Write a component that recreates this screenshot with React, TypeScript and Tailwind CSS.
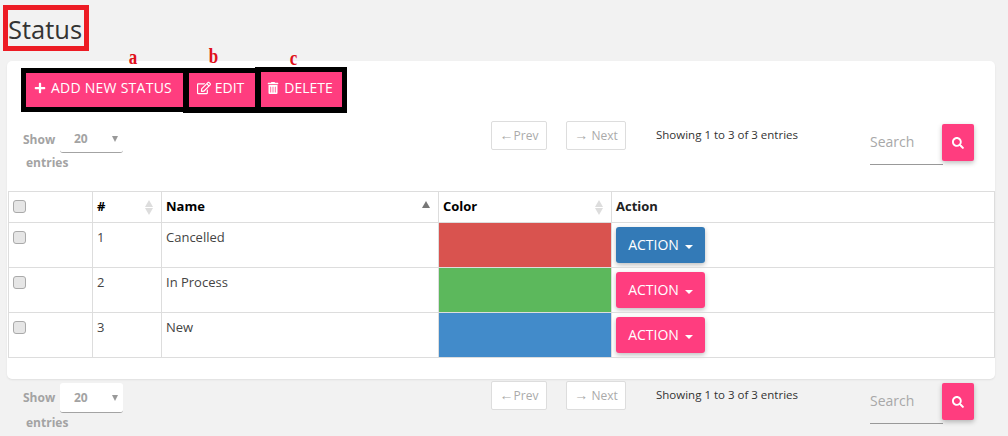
import React from "react";
import { FaPlus, FaRegEdit, FaTrashAlt, FaSearch } from "react-icons/fa";

const sans = "font-['Open_Sans',sans-serif]";

function PinkButton({ className, children }: { className: string; children: React.ReactNode }) {
  return (
    <button className={`flex items-center justify-center bg-[#ff3d7f] text-white text-[14px] ${className}`}>
      {children}
    </button>
  );
}

function Controls({ onCard }: { onCard: boolean }) {
  return (
    <div className="flex items-start">
      <div className="w-[468px] mt-[2px] flex flex-wrap items-start text-[12px] font-bold text-[#a3a3a3]">
        <span className={`w-[37px] leading-[30px] ${onCard ? "pt-[2px]" : ""}`}>Show</span>
        <div
          className={`w-[63px] h-[30px] flex items-center justify-between pl-[14px] pr-[5px] rounded-[3px] border-b border-[#a3a3a3] ${
            onCard ? "pt-[3px]" : "bg-white"
          }`}
        >
          <span>20</span>
          <span className="w-0 h-0 border-x-[3.5px] border-x-transparent border-t-[6px] border-t-[#999]"></span>
        </div>
        <span className={`w-full pl-[3px] leading-[18px] ${onCard ? "-mt-[1px]" : "mt-[1px]"}`}>entries</span>
      </div>
      <button
        className={`w-[56px] h-[29px] rounded-[2px] border border-[#ddd] text-[12px] text-[#aaa] ${onCard ? "" : "bg-white"}`}
      >
        <span className="text-[14px] leading-none">←</span>Prev
      </button>
      <button
        className={`w-[60px] h-[29px] ml-[19px] rounded-[2px] border border-[#ddd] text-[12px] text-[#aaa] ${onCard ? "" : "bg-white"}`}
      >
        <span className="text-[14px] leading-none">→</span> Next
      </button>
      <div className="w-[214px] ml-[30px] mt-[4px] text-[11.5px] leading-[20px] text-[#333]">Showing 1 to 3 of 3 entries</div>
      <div className={`w-[73px] h-[44px] pt-[8px] border-b border-[#999] text-[14px] leading-[26px] text-[#a8a8a8] ${onCard ? "" : "-mt-[1px]"}`}>
        Search
      </div>
      <button
        className={`w-[32px] h-[37px] -ml-[1px] flex items-center justify-center rounded-[2px] bg-[#ff3d7f] text-white shadow-[0_2px_5px_rgba(0,0,0,0.26)] ${
          onCard ? "mt-[3px]" : "mt-[2px]"
        }`}
      >
        <FaSearch size={12} />
      </button>
    </div>
  );
}

function Sorter({ active }: { active?: boolean }) {
  if (active) {
    return <span className="w-0 h-0 border-x-[4px] border-x-transparent border-b-[7px] border-b-[#777] mt-[-6px]"></span>;
  }
  return (
    <span className="flex flex-col gap-[1px]">
      <span className="w-0 h-0 border-x-[4px] border-x-transparent border-b-[7px] border-b-[#ddd]"></span>
      <span className="w-0 h-0 border-x-[4px] border-x-transparent border-t-[7px] border-t-[#ddd]"></span>
    </span>
  );
}

function Check() {
  return (
    <input
      type="checkbox"
      className="block appearance-none w-[13px] h-[13px] mt-[4px] ml-0 rounded-[3px] border border-[#aaa] bg-[#e6e6e6]"
    />
  );
}

function Head({ label, sort, active, black }: { label: string; sort?: boolean; active?: boolean; black?: boolean }) {
  return (
    <th className="border border-[#ddd] px-[4px] text-left align-middle">
      <div className={`flex items-center justify-between pr-[4px] text-[13px] font-bold ${black ? "text-black" : "text-[#222]"}`}>
        <span>{label}</span>
        {sort && <Sorter active={active} />}
      </div>
    </th>
  );
}

const rows = [
  { id: 1, name: "Cancelled", color: "bg-[#d9534f]", btn: "bg-[#337ab7]" },
  { id: 2, name: "In Process", color: "bg-[#5cb85c]", btn: "bg-[#ff3d7f]" },
  { id: 3, name: "New", color: "bg-[#428bca]", btn: "bg-[#ff3d7f]" },
];

const mark = "absolute font-['Liberation_Serif',serif] font-bold text-[20px] text-[#e01019] scale-x-[0.85]";

export default function App() {
  return (
    <div className={`relative w-[1008px] h-[436px] overflow-hidden bg-[#f2f2f2] ${sans}`}>
      <div className="pt-[5px] pl-[3px] h-[61px]">
        <h1 className="w-[86px] h-[46px] border-[5px] border-[#ed1c24] text-[25.5px] leading-[38px] font-normal text-[#333] overflow-hidden whitespace-nowrap">
          Status
        </h1>
      </div>

      <span className={`${mark} left-[128px] top-[42px]`}>a</span>
      <span className={`${mark} left-[208px] top-[41px]`}>b</span>
      <span className={`${mark} left-[289px] top-[43px]`}>c</span>

      <div className="ml-[7px] w-[988px] h-[318px] bg-white rounded-[5px] shadow-[0_1px_2px_rgba(0,0,0,0.08)] pt-[6px]">
        <div className="flex items-start ml-[14px] h-[54px]">
          <div className="mt-[1px] border-y-[5px] border-l-[5px] border-black">
            <PinkButton className="w-[157px] h-[34px] gap-[5px] pb-[5px] pr-[3px] tracking-[0.25px]">
              <FaPlus size={12} />
              ADD NEW STATUS
            </PinkButton>
          </div>
          <div className="mt-[1px] border-t-[5px] border-b-[6px] border-l-[6px] border-black">
            <PinkButton className="w-[66px] h-[34px] gap-[4px] pb-[5px] pr-[3px]">
              <FaRegEdit size={14} />
              EDIT
            </PinkButton>
          </div>
          <div className="border-[5px] border-b-[6px] border-l-[6px] border-black">
            <PinkButton className="w-[81px] h-[35px] gap-[5px] pb-[4px] pr-[3px]">
              <FaTrashAlt size={12} />
              DELETE
            </PinkButton>
          </div>
        </div>

        <div className="pl-[16px] h-[70px]">
          <Controls onCard />
        </div>

        <table className="ml-[1px] w-[986px] table-fixed border-collapse text-[13px] text-[#444]">
          <colgroup>
            <col className="w-[84px]" />
            <col className="w-[69px]" />
            <col className="w-[277px]" />
            <col className="w-[173px]" />
            <col className="w-[383px]" />
          </colgroup>
          <thead>
            <tr className="h-[31px]">
              <th className="border border-[#ddd] px-[4px] align-top pt-[4px]">
                <Check />
              </th>
              <Head label="#" sort black />
              <Head label="Name" sort active black />
              <Head label="Color" sort black />
              <Head label="Action" />
            </tr>
          </thead>
          <tbody>
            {rows.map((r) => (
              <tr key={r.id} className="h-[45px]">
                <td className="border border-[#ddd] px-[4px] pt-[4px] align-top">
                  <Check />
                </td>
                <td className="border border-[#ddd] px-[4px] pt-[4px] align-top leading-[20px]">{r.id}</td>
                <td className="border border-[#ddd] px-[4px] pt-[4px] align-top leading-[20px]">{r.name}</td>
                <td className={`border border-[#ddd] ${r.color}`}></td>
                <td className="border border-[#ddd] px-[4px] align-middle">
                  <button
                    className={`flex items-center justify-center gap-[6px] w-[89px] h-[36px] pb-[2px] rounded-[3px] text-white text-[14px] shadow-[0_2px_5px_rgba(0,0,0,0.26)] ${r.btn}`}
                  >
                    ACTION
                    <span className="w-0 h-0 mt-[5px] border-x-[4px] border-x-transparent border-t-[4px] border-t-white"></span>
                  </button>
                </td>
              </tr>
            ))}
          </tbody>
        </table>
      </div>

      <div className="pl-[23px] pt-[2px]">
        <Controls onCard={false} />
      </div>
    </div>
  );
}
